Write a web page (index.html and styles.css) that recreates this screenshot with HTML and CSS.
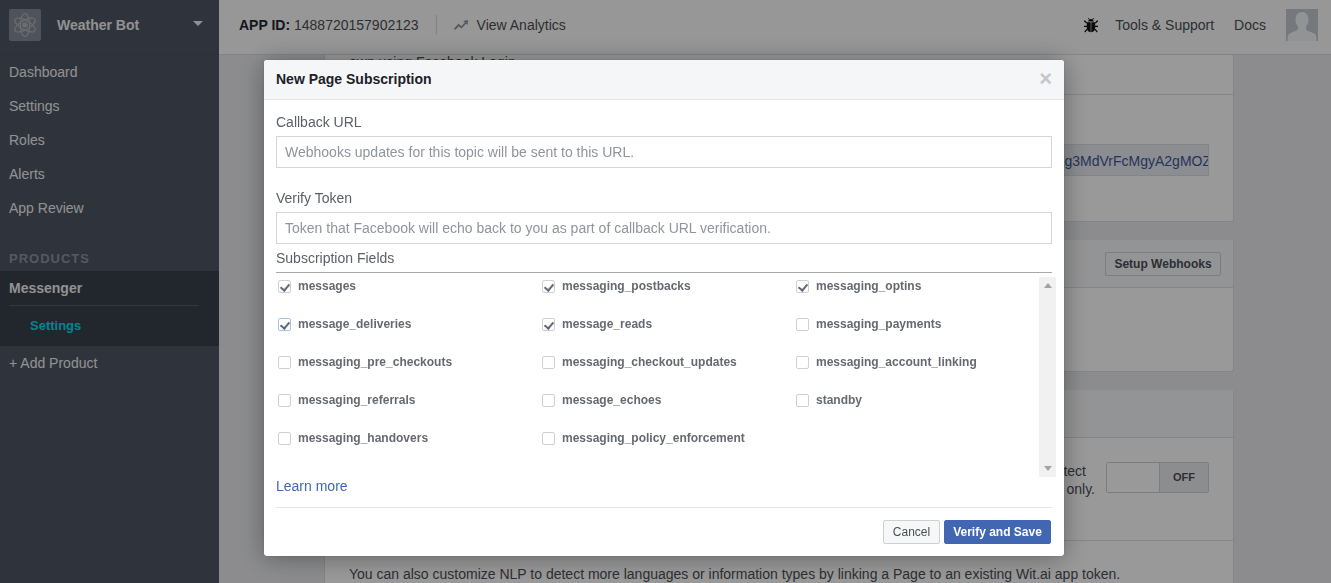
FILE: index.html
```html
<!DOCTYPE html>
<html lang="en">
<head>
    <meta charset="UTF-8">
    <title>Weather Bot - Messenger Settings</title>
    <link rel="stylesheet" href="styles.css">
</head>
<body>
    <div class="app">
        <aside class="sidebar">
            <div class="side-head">
                <div class="app-logo">
                    <svg width="26" height="26" viewBox="0 0 26 26" fill="none" stroke="#b4b6ba" stroke-width="1.2">
                        <ellipse cx="13" cy="13" rx="11.5" ry="4.6" transform="rotate(30 13 13)"/>
                        <ellipse cx="13" cy="13" rx="11.5" ry="4.6" transform="rotate(-30 13 13)"/>
                        <ellipse cx="13" cy="13" rx="4.6" ry="11.5"/>
                        <circle cx="13" cy="13" r="2.2" fill="#b4b6ba"/>
                    </svg>
                </div>
                <span class="app-name">Weather Bot</span>
                <span class="caret"></span>
            </div>
            <nav class="side-nav">
                <a>Dashboard</a>
                <a>Settings</a>
                <a>Roles</a>
                <a>Alerts</a>
                <a>App Review</a>
            </nav>
            <div class="side-label">PRODUCTS</div>
            <div class="product">
                <div class="product-name">Messenger</div>
                <div class="product-sub">Settings</div>
            </div>
            <a class="add-product">+ Add Product</a>
        </aside>

        <div class="right">
            <header class="topbar">
                <span class="app-id"><b>APP ID:</b> 1488720157902123</span>
                <span class="top-sep"></span>
                <svg class="trend" width="14" height="10" viewBox="0 0 14 10" fill="#8f9196">
                    <path d="M0 8.6 4.6 3.8 7.4 6.2 11 2.4 9.2 1 14 0 13.6 5 12.2 3.6 7.5 8.6 4.7 6.2 1.2 10z"/>
                </svg>
                <span class="top-link">View Analytics</span>
                <span class="top-right">
                    <svg class="bug" width="14" height="15" viewBox="0 0 14 15" fill="#111">
                        <path d="M4.2 3.6C4.400 1.900 5.600 1 7 1s2.600.9 2.800 2.600z"/>
                        <path d="M2.800 4.200h3.900V14.200C4.500 14 2.800 12.300 2.800 10zM7.300 4.200h3.900V10c0 2.300-1.700 4-3.900 4.200z"/>
                        <path d="M0 2.500h1.200l2 2.200-.7.800L0 3.400zM14 2.500h-1.200l-2 2.200.7.800L14 3.400zM0 7.700h3v1.300H0zM11 7.700h3v1.300h-3zM.3 13.600l2.400-2.900.8.800-2.300 2.900zM13.700 13.600l-2.400-2.900-.8.800 2.300 2.900zM4 .3l.8-.3 1 1.600-.7.400zM10 .3 9.200 0l-1 1.600.7.400z"/>
                    </svg>
                    <span class="top-link">Tools &amp; Support</span>
                    <span class="top-link">Docs</span>
                    <svg class="avatar" width="32" height="32" viewBox="0 0 32 32">
                        <rect width="32" height="32" fill="#c3c8d0"/>
                        <path d="M16 3c4 0 6.500 3 6.500 7.500 0 3-1 5.500-2.500 7v3c1 1.500 6 2.500 9 4.500 1 .7 1.500 2.500 1.500 7h-29c0-4.500.5-6.300 1.500-7 3-2 8-3 9-4.500v-3c-1.500-1.500-2.500-4-2.500-7C9.500 6 12 3 16 3z" fill="#f4f5f7"/>
                    </svg>
                </span>
            </header>

            <main class="content">
                <section class="card card-first">
                    <p class="clip-line">own using Facebook Login</p>
                    <div class="card-row token-row">
                        <div class="token"><span>EAAGg3MdVrFcMgyA2gMOZg3MdVrFcMgyA2gMOZg3MdVrFcMgyA2gMOZ</span></div>
                    </div>
                </section>
                <section class="card card-hooks">
                    <div class="card-head">
                        <button class="btn-plain">Setup Webhooks</button>
                    </div>
                </section>
                <section class="card card-nlp">
                    <div class="card-head"></div>
                    <div class="nlp-body">
                        <p class="nlp-text">
                            <span class="nlp-line nlp-line-first">Detect the intent of messages to your Page and respond automatically to protect</span>
                            <span class="nlp-line">your Page, this setting is available to testers of your app only.</span>
                        </p>
                        <div class="toggle"><span class="toggle-blank"></span><span class="toggle-off">OFF</span></div>
                    </div>
                    <p class="nlp-foot">You can also customize NLP to detect more languages or information types by linking a Page to an existing Wit.ai app token.</p>
                </section>
            </main>
        </div>
    </div>

    <div class="backdrop">
        <div class="modal">
            <div class="modal-head">
                <h2>New Page Subscription</h2>
                <span class="modal-x">&times;</span>
            </div>
            <div class="modal-body">
                <label class="field-label">Callback URL</label>
                <input class="field" placeholder="Webhooks updates for this topic will be sent to this URL.">
                <label class="field-label label-token">Verify Token</label>
                <input class="field" placeholder="Token that Facebook will echo back to you as part of callback URL verification.">
                <div class="subs-label">Subscription Fields</div>
                <div class="subs-box">
                    <div class="subs-grid">
                        <div class="sub"><span class="check on"></span>messages</div>
                        <div class="sub"><span class="check on"></span>messaging_postbacks</div>
                        <div class="sub"><span class="check on"></span>messaging_optins</div>
                        <div class="sub"><span class="check on focus"></span>message_deliveries</div>
                        <div class="sub"><span class="check on"></span>message_reads</div>
                        <div class="sub"><span class="check"></span>messaging_payments</div>
                        <div class="sub"><span class="check"></span>messaging_pre_checkouts</div>
                        <div class="sub"><span class="check"></span>messaging_checkout_updates</div>
                        <div class="sub"><span class="check"></span>messaging_account_linking</div>
                        <div class="sub"><span class="check"></span>messaging_referrals</div>
                        <div class="sub"><span class="check"></span>message_echoes</div>
                        <div class="sub"><span class="check"></span>standby</div>
                        <div class="sub"><span class="check"></span>messaging_handovers</div>
                        <div class="sub"><span class="check"></span>messaging_policy_enforcement</div>
                    </div>
                    <div class="scrollbar">
                        <span class="arrow-up"></span>
                        <span class="arrow-down"></span>
                    </div>
                </div>
                <a class="learn">Learn more</a>
            </div>
            <div class="modal-foot">
                <button class="btn-cancel">Cancel</button>
                <button class="btn-save">Verify and Save</button>
            </div>
        </div>
    </div>
</body>
</html>
```

FILE: styles.css
```css
* {
    box-sizing: border-box;
}
html, body {
    height: 100%;
}
body {
    margin: 0;
    overflow: hidden;
    font-family: "Liberation Sans", Arial, sans-serif;
    font-size: 14px;
    color: #4b4f56;
    background: #e9eaed;
}
.app {
    display: flex;
    height: 583px;
    overflow: hidden;
}

/* sidebar */
.sidebar {
    width: 219px;
    flex: none;
    background: #4e5665;
    color: #f2f2f2;
}
.side-head {
    height: 55px;
    display: flex;
    align-items: center;
    padding: 0 16px 4px 9px;
    border-bottom: 1px solid #485060;
}
.app-logo {
    width: 32px;
    height: 32px;
    border-radius: 2px;
    background: #858b97;
    display: flex;
    align-items: center;
    justify-content: center;
}
.app-name {
    margin-left: 16px;
    font-weight: bold;
    flex: 1;
}
.caret {
    border-left: 5px solid transparent;
    border-right: 5px solid transparent;
    border-top: 5px solid #f2f2f2;
    margin-bottom: 3px;
}
.side-nav a {
    display: block;
    height: 34px;
    line-height: 34px;
    padding-left: 9px;
}
.side-label {
    margin-top: 22px;
    height: 24px;
    line-height: 24px;
    padding-left: 9px;
    font-size: 13px;
    font-weight: bold;
    letter-spacing: 1px;
    color: #8e95a0;
}
.product {
    height: 75px;
    background: #3a404c;
    padding: 0 20px 0 9px;
}
.product-name {
    height: 35px;
    line-height: 34px;
    font-weight: bold;
    border-bottom: 1px solid #565c68;
}
.product-sub {
    line-height: 40px;
    padding-left: 21px;
    font-size: 13px;
    font-weight: bold;
    color: #06dcec;
}
.add-product {
    display: block;
    height: 34px;
    line-height: 34px;
    padding-left: 9px;
}

/* top bar */
.right {
    flex: 1;
    min-width: 0;
    display: flex;
    flex-direction: column;
}
.topbar {
    height: 55px;
    flex: none;
    display: flex;
    align-items: center;
    padding: 0 13px 4px 20px;
    background: #fcfcfc;
    border-bottom: 1px solid #dcdde0;
    position: relative;
    z-index: 1;
}
.app-id b {
    color: #23272e;
}
.top-sep {
    width: 1px;
    height: 20px;
    background: #dadbde;
    margin: 0 17px;
}
.trend {
    margin-right: 9px;
}
.top-right {
    margin-left: auto;
    display: flex;
    align-items: center;
}
.bug {
    margin-right: 17px;
}
.top-link + .top-link {
    margin-left: 20px;
}
.avatar {
    margin-left: 20px;
}

/* page behind the dialog */
.content {
    flex: 1;
    margin-left: 105px;
    width: 910px;
}
.card {
    background: #fff;
    border: 1px solid #dcdee3;
    border-radius: 3px;
    border-top: 0;
}
.card-first {
    height: 167px;
    margin-bottom: 18px;
    padding-top: 1px;
}
.clip-line {
    margin: 0;
    height: 39px;
    padding-left: 24px;
    line-height: 12px;
    border-bottom: 1px solid #dcdee3;
    color: #4b4f56;
}
.token-row {
    padding: 49px 24px 0 0;
    display: flex;
    justify-content: flex-end;
}
.token {
    width: 560px;
    height: 32px;
    line-height: 32px;
    background: #e9ebf0;
    border: 1px solid #dcdee3;
    overflow: hidden;
    white-space: nowrap;
    color: #3b5998;
    display: flex;
    justify-content: flex-end;
}
.token span {
    flex: none;
    margin-right: -3px;
}
.card-head {
    height: 48px;
    background: #f6f7f9;
    border-bottom: 1px solid #dcdee3;
    display: flex;
    align-items: center;
    justify-content: flex-end;
    padding-right: 12px;
}
.card-hooks {
    height: 132px;
    margin-bottom: 18px;
}
.btn-plain {
    width: 116px;
    height: 24px;
    padding: 0;
    font: bold 12px "Liberation Sans", Arial, sans-serif;
    color: #4b4f56;
    background: #f6f7f9;
    border: 1px solid #ced0d4;
    border-radius: 2px;
}
.card-nlp {
    height: 240px;
}
.nlp-body {
    height: 103px;
    display: flex;
    justify-content: flex-end;
    padding: 24px 24px 0 0;
    border-bottom: 1px solid #dcdee3;
}
.nlp-text {
    margin: 0 11px 0 0;
    line-height: 18px;
    text-align: right;
    color: #4b4f56;
}
.nlp-line {
    display: block;
}
.nlp-line-first {
    padding-right: 9px;
}
.toggle {
    width: 103px;
    height: 31px;
    display: flex;
    border: 1px solid #ced0d4;
    border-radius: 2px;
}
.toggle-blank {
    flex: 1;
    border-right: 1px solid #ced0d4;
    background: #fff;
}
.toggle-off {
    width: 48px;
    line-height: 29px;
    text-align: center;
    font-size: 11px;
    font-weight: bold;
    background: #e9ebee;
}
.nlp-foot {
    margin: 25px 0 0 24px;
    line-height: 16px;
    color: #4b4f56;
}

/* dialog */
.backdrop {
    position: fixed;
    inset: 0;
    z-index: 10;
    background: rgba(0, 0, 0, .4);
    padding: 60px 0 0 264px;
}
.modal {
    width: 800px;
    height: 496px;
    background: #fff;
    border-radius: 3px;
    box-shadow: 0 2px 26px rgba(0, 0, 0, .35), 0 0 1px rgba(0, 0, 0, .4);
    display: flex;
    flex-direction: column;
}
.modal-head {
    height: 40px;
    flex: none;
    display: flex;
    align-items: center;
    justify-content: space-between;
    padding: 0 12px 1px;
    background: #f5f6f7;
    border-bottom: 1px solid #e5e5e5;
    border-radius: 3px 3px 0 0;
}
.modal-head h2 {
    margin: 0;
    font-size: 14px;
    color: #1d2129;
}
.modal-x {
    font-size: 22px;
    font-weight: bold;
    line-height: 22px;
    color: #c4c6cb;
}
.modal-body {
    flex: 1;
    padding: 12px 12px 0;
}
.field-label {
    display: block;
    height: 20px;
    line-height: 20px;
    color: #5c6068;
}
.label-token {
    margin-top: 20px;
}
.field {
    display: block;
    width: 100%;
    height: 32px;
    margin-top: 4px;
    padding: 0 8px;
    font: 14px "Liberation Sans", Arial, sans-serif;
    border: 1px solid #d3d6db;
    outline: 0;
}
.field::placeholder {
    color: #90949c;
    opacity: 1;
}
.subs-label {
    height: 20px;
    margin-top: 4px;
    line-height: 20px;
    color: #5c6068;
}
.subs-box {
    position: relative;
    height: 205px;
    margin-top: 4px;
    border-top: 1px solid #a9a9a9;
    padding-top: 5px;
}
.subs-grid {
    display: grid;
    grid-template-columns: 264px 254px 1fr;
    grid-auto-rows: 38px;
    padding-left: 2px;
}
.sub {
    display: flex;
    align-items: flex-start;
    height: 18px;
    line-height: 16px;
    font-size: 12px;
    font-weight: bold;
    color: #666a70;
}
.check {
    position: relative;
    width: 13px;
    height: 13px;
    margin: 2px 7px 0 0;
    background: #fff;
    border: 1px solid #ced0d4;
    border-radius: 2px;
    flex: none;
}
.check.focus {
    border-color: #a8c2f0;
}
.check.on::after {
    content: "";
    position: absolute;
    left: 3px;
    top: 1px;
    width: 4px;
    height: 7px;
    border-right: 2px solid #646a78;
    border-bottom: 2px solid #646a78;
    transform: rotate(40deg);
}
.scrollbar {
    position: absolute;
    top: 4px;
    right: -4px;
    bottom: 0;
    width: 17px;
    background: #f1f1f1;
    display: flex;
    flex-direction: column;
    align-items: center;
    justify-content: space-between;
    padding: 6px 0;
}
.arrow-up {
    border-left: 4px solid transparent;
    border-right: 4px solid transparent;
    border-bottom: 5px solid #a3a3a3;
}
.arrow-down {
    border-left: 4px solid transparent;
    border-right: 4px solid transparent;
    border-top: 5px solid #a3a3a3;
}
.learn {
    display: block;
    line-height: 18px;
    color: #4267b2;
}
.modal-foot {
    height: 49px;
    flex: none;
    margin: 0 12px;
    border-top: 1px solid #e5e5e5;
    display: flex;
    justify-content: flex-end;
    align-items: center;
    gap: 4px;
    padding: 0 1px 1px 0;
}
.btn-cancel, .btn-save {
    height: 24px;
    padding: 0 8px;
    font: 12px "Liberation Sans", Arial, sans-serif;
    border-radius: 2px;
}
.btn-cancel {
    width: 57px;
    color: #4b4f56;
    background: #f6f7f9;
    border: 1px solid #ced0d4;
}
.btn-save {
    width: 107px;
    font-weight: bold;
    color: #fff;
    background: #4267b2;
    border: 1px solid #4267b2;
}
```
